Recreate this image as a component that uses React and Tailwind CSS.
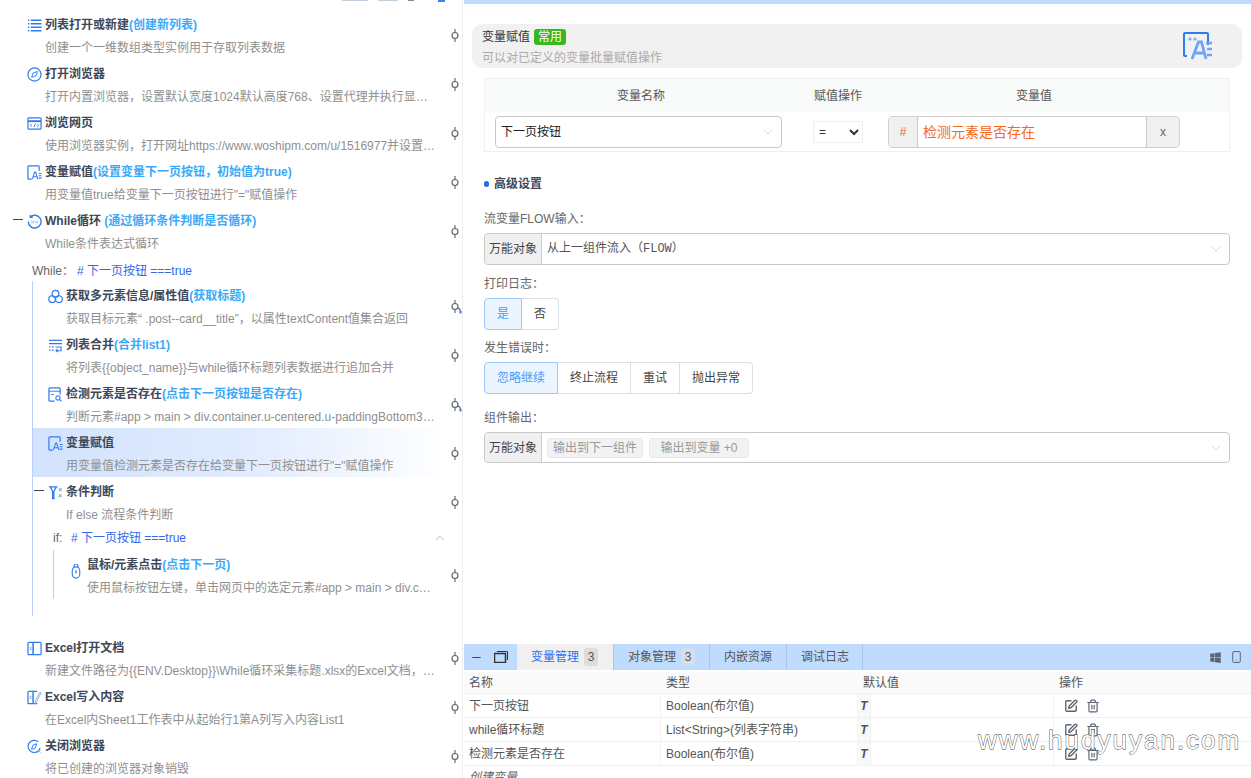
import { ChevronDown, ChevronUp, Minus, SquarePen, Trash2, Smartphone } from 'lucide-react';
import { DiWindows } from 'react-icons/di';

const BLUE = '#2f7bf0';

function IconBox({ children, className = 'w-[15px] h-[15px]' }) {
    return (
        <svg viewBox="0 0 16 16" fill="none" stroke={BLUE} strokeWidth="1.3" className={className}>
            {children}
        </svg>
    );
}

const ListIcon = () => (
    <IconBox>
        <path d="M1 2.5h1.5M1 6.2h1.5M1 9.9h1.5M1 13.6h1.5M4 2.5h11.5M4 6.2h11.5M4 9.9h11.5M4 13.6h11.5" strokeWidth="1.6" />
    </IconBox>
);
const CompassIcon = () => (
    <IconBox>
        <circle cx="8" cy="8" r="7" />
        <path d="M11.2 4.8 9.6 9.4 5 11l1.4-4.6z" strokeWidth="1" />
    </IconBox>
);
const WebIcon = () => (
    <IconBox>
        <rect x="1" y="2" width="14" height="12" rx="1" />
        <path d="M1 5.5h14" strokeWidth="2" />
        <path d="M5 8.5 3.6 10 5 11.5M11 8.5l1.4 1.5-1.4 1.5M8.8 8.2l-1.4 3.6" strokeWidth="1" />
    </IconBox>
);
const AssignIcon = () => (
    <IconBox>
        <path d="M5 15H2a1 1 0 0 1-1-1V2a1 1 0 0 1 1-1h10a1 1 0 0 1 1 1v4" />
        <path d="M3.4 4.2h.1M5.6 4.2h.1" strokeWidth="1.4" />
        <path d="M5.5 15 8.3 7.5h.8l2.6 7.5M6.6 12.6h4" strokeWidth="1.1" />
        <path d="M12.5 9h3M12.5 11.5h3M12.5 14h3" strokeWidth="1.1" />
    </IconBox>
);
const LoopIcon = () => (
    <IconBox>
        <path d="M3.5 3.2A6.8 6.8 0 1 1 1.4 8" strokeWidth="1.5" />
        <path d="M3.4.8v2.8h2.8" strokeWidth="1.2" />
        <path d="M4.5 7l.8 3 .9-2.4.9 2.4.8-3M9.4 7v3M11.4 7v3M9.4 8.5h2" stroke="#9db9e8" strokeWidth=".7" />
    </IconBox>
);
const CloudsIcon = () => (
    <IconBox>
        <circle cx="8" cy="5" r="3.6" />
        <circle cx="4.4" cy="10.8" r="3.6" />
        <circle cx="11.6" cy="10.8" r="3.6" />
    </IconBox>
);
const MergeIcon = () => (
    <IconBox>
        <path d="M1 2.5h14M1 6h14" strokeWidth="1.3" />
        <path d="M1 9.5h1.5M1 13h1.5M4 9.5h2M4 13h2" />
        <path d="M8 9.5h6v4H9M10.2 11.6 8.5 13.5l1.7 1.5" strokeWidth="1.1" />
    </IconBox>
);
const DetectIcon = () => (
    <IconBox>
        <path d="M7 15H2a1 1 0 0 1-1-1V2a1 1 0 0 1 1-1h10a1 1 0 0 1 1 1v6" />
        <path d="M1 4.5h12M3.5 8h3" strokeWidth="1" />
        <circle cx="10.6" cy="11.6" r="2.2" strokeWidth="1.1" />
        <path d="m12.3 13.3 2 2" strokeWidth="1.2" />
    </IconBox>
);
const CondIcon = () => (
    <IconBox>
        <path d="M1 2h9M2.5 2l2.5 5v7h1.2V7l2.6-5" strokeWidth="1.4" />
        <path d="M4 14.5h3.2" strokeWidth="1.2" />
        <path d="m11.4 3.4 3.2 3M14.6 3.4l-3.2 3M11.4 10l3.2 3M14.6 10l-3.2 3" strokeWidth="1.1" stroke="#86aef0" />
    </IconBox>
);
const MouseIcon = () => (
    <svg viewBox="0 0 10 16" fill="none" stroke={BLUE} strokeWidth="1.2" className="w-[10px] h-[15px]">
        <rect x="1" y="3" width="8" height="12" rx="4" />
        <path d="M3 3.2V2a2 2 0 0 1 4 0v1.2" />
        <path d="M5 7v3" strokeWidth="1.4" />
    </svg>
);
const ExcelIcon = () => (
    <IconBox>
        <rect x="1" y="1.5" width="14" height="13" rx="1" />
        <path d="M6.5 1.5v13" strokeWidth="1.6" />
        <path d="m2.6 6.2 2.4 3.4M5 6.2 2.6 9.6" strokeWidth=".9" stroke="#86aef0" />
    </IconBox>
);
const ExcelWriteIcon = () => (
    <IconBox>
        <path d="M11 1.5H2a1 1 0 0 0-1 1v11a1 1 0 0 0 1 1h9" />
        <path d="M6.5 1.5v13" strokeWidth="1.6" />
        <path d="m2.6 6.2 2.4 3.4M5 6.2 2.6 9.6" strokeWidth=".9" stroke="#86aef0" />
        <path d="m15 3-4.5 9-1.7 2.5.2-3L13.500 2.500z" strokeWidth="1" stroke="#86aef0" />
    </IconBox>
);
const CloseBrowserIcon = () => (
    <IconBox>
        <path d="M14 9.500A6.500 6.500 0 1 1 12 3" />
        <path d="M10.500 5 8.500 9.800 4.800 11l1.500-4.400z" strokeWidth="1" />
        <path d="m11.500 11.500 3 3M14.500 11.500l-3 3" strokeWidth="1" stroke="#86aef0" />
    </IconBox>
);

function Anchor({ curl }) {
    return (
        <div className="w-[15px] shrink-0 flex justify-center pt-[18px]">
            <svg width="14" height="15" viewBox="0 0 14 15" fill="none" stroke="#59606e" strokeWidth="1.1">
                <path d="M7 1v3.500M7 10.500V14" />
                <circle cx="7" cy="7.500" r="3" />
                {curl && <path d="M10 9c2 .5 2.500 2 2.500 4" stroke="#59606e" />}
                {curl && <path d="M11.500 12h2v2.500h-2z" fill={BLUE} stroke="none" />}
            </svg>
        </div>
    );
}

function StepRow({ icon, title, note, desc, pad = 'pl-[27px]', selected, dash, curl, narrow }) {
    return (
        <div className="relative flex h-[49px]">
            {dash && <span className={`absolute ${dash} top-[13px] w-[10px] h-px bg-[#444]`}></span>}
            <div
                className={`flex-1 min-w-0 pt-px pr-[9px] ${pad} ${
                    selected ? 'bg-gradient-to-r from-[#d3e3fd] via-[#e0ebfe] to-white' : ''
                }`}
            >
                <div className="flex items-center h-[28px]">
                    <span className="w-[18px] shrink-0 flex items-center">{icon}</span>
                    <span className="text-xs font-semibold text-[#3d4757] whitespace-nowrap">
                        {title}
                        {note && <span className="text-[#3ba9f7]">{note}</span>}
                    </span>
                </div>
                <div className={`ml-[18px] text-xs text-[#8f8f8f] leading-[18px] truncate ${narrow ? 'mr-[4px]' : ''}`}>{desc}</div>
            </div>
            <Anchor curl={curl} />
        </div>
    );
}

function LeftPanel() {
    return (
        <div className="w-[463px] shrink-0 border-r border-[#eeeeee] h-full overflow-hidden">
            <div className="flex h-[10px] items-start pl-[342px] gap-[10px]">
                <span className="w-[26px] h-px bg-[#c4cfdd]"></span>
                <span className="w-[20px] h-px bg-[#c4cfdd]"></span>
                <span className="w-[6px] h-px bg-[#888]"></span>
                <span className="w-[7px] h-[2px] ml-[14px] bg-[#3b82f6]"></span>
            </div>
            <StepRow icon={<ListIcon />} title="列表打开或新建" note="(创建新列表)" desc="创建一个一维数组类型实例用于存取列表数据" />
            <StepRow icon={<CompassIcon />} title="打开浏览器" desc="打开内置浏览器，设置默认宽度1024默认高度768、设置代理并执行显示浏览器窗口操作" />
            <StepRow icon={<WebIcon />} title="浏览网页" desc="使用浏览器实例，打开网址https://www.woshipm.com/u/1516977并设置超时等待时间" />
            <StepRow icon={<AssignIcon />} title="变量赋值" note="(设置变量下一页按钮，初始值为true)" desc={'用变量值true给变量下一页按钮进行"="赋值操作'} />
            <StepRow icon={<LoopIcon />} title="While循环" note=" (通过循环条件判断是否循环)" desc="While条件表达式循环" dash="left-[13px]" />
            <div className="h-[26px] pl-[32px] pt-[6px] flex items-center text-xs">
                <span className="text-[#666] w-[45px]">While：</span>
                <span className="text-[#3467ee]"># 下一页按钮 ===true</span>
            </div>
            <div className="ml-[32px] border-l border-[#b9d0fb] pb-[17px]">
                <StepRow pad="pl-[15px]" icon={<CloudsIcon />} title="获取多元素信息/属性值" note="(获取标题)" desc="获取目标元素“ .post--card__title”，以属性textContent值集合返回" curl />
                <StepRow pad="pl-[15px]" icon={<MergeIcon />} title="列表合并" note="(合并list1)" desc="将列表{{object_name}}与while循环标题列表数据进行追加合并" />
                <StepRow pad="pl-[15px]" icon={<DetectIcon />} title="检测元素是否存在" note="(点击下一页按钮是否存在)" desc="判断元素#app > main > div.container.u-centered.u-paddingBottom30.u-clearfix是否存在" curl />
                <StepRow pad="pl-[15px]" icon={<AssignIcon />} title="变量赋值" desc={'用变量值检测元素是否存在给变量下一页按钮进行"="赋值操作'} selected />
                <StepRow pad="pl-[15px]" icon={<CondIcon />} title="条件判断" desc="If else 流程条件判断" dash="left-px" />
                <div className="h-[24px] pl-[20px] pr-[15px] flex items-center text-xs">
                    <span className="text-[#666] w-[18px]">if:</span>
                    <span className="text-[#3467ee]"># 下一页按钮 ===true</span>
                    <ChevronUp className="ml-auto w-[14px] h-[14px] text-[#888]" strokeWidth={1} />
                </div>
                <div className="ml-[20px] border-l border-[#b9d0fb]">
                    <StepRow
                        pad="pl-[15px]"
                        narrow
                        icon={<span className="mt-[12px] ml-[2px]"><MouseIcon /></span>}
                        title="鼠标/元素点击"
                        note="(点击下一页)"
                        desc="使用鼠标按钮左键，单击网页中的选定元素#app > main > div.container.u-centered.u-paddingBottom30"
                    />
                </div>
            </div>
            <div className="h-[17px]"></div>
            <StepRow icon={<ExcelIcon />} title="Excel打开文档" desc="新建文件路径为{{ENV.Desktop}}\While循环采集标题.xlsx的Excel文档，并将对象保存到变量" />
            <StepRow icon={<ExcelWriteIcon />} title="Excel写入内容" desc="在Excel内Sheet1工作表中从起始行1第A列写入内容List1" />
            <StepRow icon={<CloseBrowserIcon />} title="关闭浏览器" desc="将已创建的浏览器对象销毁" />
        </div>
    );
}

function Addon({ children }) {
    return (
        <span className="w-[57px] shrink-0 h-full flex items-center justify-center bg-[#f0f0f0] border-r border-[#cccccc] text-xs text-[#444] rounded-l-[4px]">
            {children}
        </span>
    );
}

function Caret() {
    return <ChevronDown className="w-[16px] h-[16px] text-[#c6c6c6]" strokeWidth={1} />;
}

function Label({ className, children }) {
    return <div className={`text-xs text-[#666] leading-4 ${className}`}>{children}</div>;
}

function BtnGroup({ items }) {
    return (
        <div className="flex h-[32px] text-xs">
            {items.map((it, i) => (
                <span
                    key={it.label}
                    style={{ width: it.w }}
                    className={`flex items-center justify-center border-y border-r ${i === 0 ? 'border-l rounded-l-[4px]' : ''} ${
                        i === items.length - 1 ? 'rounded-r-[4px]' : ''
                    } ${i === 0 ? 'bg-[#ecf5ff] border-[#9cc9fb] text-[#4f9bf7]' : 'border-[#dcdfe6] text-[#444]'}`}
                >
                    {it.label}
                </span>
            ))}
        </div>
    );
}

function SettingsPanel() {
    return (
        <div className="flex-1 min-h-0 overflow-hidden">
            <div className="ml-[8px] mr-[9px] mt-[20px] h-[44px] rounded-[10px] bg-[#f1f1f1] pl-[10px] pr-[29px] flex items-center justify-between">
                <div className="pt-[2px]">
                    <div className="flex items-center h-[16px] mt-px">
                        <span className="text-xs text-[#333]">变量赋值</span>
                        <span className="ml-[4px] w-[32px] h-[16px] rounded-[3px] bg-[#38b81f] text-white text-xs leading-4 text-center">常用</span>
                    </div>
                    <div className="text-xs text-[#aaaaaa] leading-4 mt-[5px]">可以对已定义的变量批量赋值操作</div>
                </div>
                <svg viewBox="0 0 30 28" fill="none" className="w-[30px] h-[28px]">
                    <path d="M4 24H2a1 1 0 0 1-1-1V2a1 1 0 0 1 1-1h22a1 1 0 0 1 1 1v11" stroke="#2f7bf0" strokeWidth="2" />
                    <circle cx="7" cy="7" r="1.500" fill="#7aa9f5" />
                    <circle cx="12" cy="7" r="1.500" fill="#7aa9f5" />
                    <path d="M9 27 15.500 10h3l4.500 17M12 21h9" stroke="#6ea3f7" strokeWidth="2.800" />
                    <path d="M23 11h6M24 17h5M24 23h5" stroke="#6ea3f7" strokeWidth="2.500" />
                </svg>
            </div>

            <div className="ml-[20px] mr-[21px] mt-[10px] border border-[#eef1f4] h-[74px]">
                <div className="flex h-[33px] bg-[#f8faf9] text-xs text-[#555] items-center">
                    <span className="w-[312px] text-center">变量名称</span>
                    <span className="w-[82px] text-center">赋值操作</span>
                    <span className="w-[310px] text-center">变量值</span>
                </div>
                <div className="flex items-center h-[39px] pl-[10px]">
                    <div className="w-[287px] h-[32px] rounded-[4px] border border-[#c8c8c8] flex items-center justify-between pl-[5px] pr-[5px] text-xs text-[#222]">
                        下一页按钮
                        <Caret />
                    </div>
                    <select className="ml-[31px] w-[50px] h-[22px] border border-[#eeeeee] text-xs text-[#333] pl-[1px] bg-white">
                        <option>=</option>
                    </select>
                    <div className="ml-[25px] w-[292px] h-[32px] rounded-[4px] border border-[#d0d0d0] flex items-center text-xs overflow-hidden">
                        <span className="w-[29px] h-full shrink-0 bg-[#f0f0f0] border-r border-[#cccccc] flex items-center justify-center text-[#f26a21]">#</span>
                        <span className="flex-1 pl-[5px] text-sm text-[#f26a21]">检测元素是否存在</span>
                        <span className="w-[33px] h-full shrink-0 bg-[#f0f0f0] border-l border-[#cccccc] flex items-center justify-center text-[#666]">x</span>
                    </div>
                </div>
            </div>

            <div className="ml-[20px] mr-[21px]">
                <div className="mt-[24px] flex items-center text-xs font-semibold text-[#3d4757] leading-4">
                    <span className="w-[5px] h-[6px] rounded-full bg-[#1f6ff0] mr-[5px]"></span>
                    高级设置
                </div>
                <Label className="mt-[19px]">流变量FLOW输入：</Label>
                <div className="mt-[6px] h-[32px] rounded-[4px] border border-[#c8c8c8] flex items-center text-xs">
                    <Addon>万能对象</Addon>
                    <span className="pl-[5px] text-[#555] font-['Liberation_Mono','Noto_Sans_CJK_SC',monospace]">从上一组件流入（FLOW）</span>
                    <span className="ml-auto mr-[5px]"><Caret /></span>
                </div>
                <Label className="mt-[11px]">打印日志：</Label>
                <div className="mt-[6px]">
                    <BtnGroup items={[{ label: '是', w: 38 }, { label: '否', w: 37 }]} />
                </div>
                <Label className="mt-[10px]">发生错误时：</Label>
                <div className="mt-[6px]">
                    <BtnGroup
                        items={[
                            { label: '忽略继续', w: 74 },
                            { label: '终止流程', w: 73 },
                            { label: '重试', w: 49 },
                            { label: '抛出异常', w: 73 },
                        ]}
                    />
                </div>
                <Label className="mt-[16px]">组件输出：</Label>
                <div className="mt-[6px] h-[31px] rounded-[4px] border border-[#c8c8c8] flex items-center text-xs">
                    <Addon>万能对象</Addon>
                    <span className="ml-[5px] w-[96px] h-[20px] rounded-[3px] bg-[#f2f2f2] border border-[#e8e8e8] text-[#999] flex items-center justify-center">输出到下一组件</span>
                    <span className="ml-[6px] w-[100px] h-[20px] rounded-[3px] bg-[#f2f2f2] border border-[#e8e8e8] text-[#999] flex items-center justify-center">输出到变量 +0</span>
                    <span className="ml-auto mr-[5px]"><Caret /></span>
                </div>
            </div>
        </div>
    );
}

function VarRow({ name, type }) {
    return (
        <div className="grid grid-cols-[197px_197px_196px_197px] h-[24px] border-b border-[#f0f0f0] text-xs text-[#555] items-stretch">
            <span className="pl-[5px] flex items-center border-r border-[#f4f4f4]">{name}</span>
            <span className="pl-[5px] flex items-center border-r border-[#f4f4f4]">{type}</span>
            <span className="flex items-stretch border-r border-[#f4f4f4]">
                <span className="w-[13px] bg-[#f8f8f8] border-r border-[#f0f0f0] flex items-center justify-center italic font-bold text-[#555]">T</span>
            </span>
            <span className="pl-[10px] flex items-center gap-[8px] text-[#5a6472]">
                <SquarePen className="w-[14px] h-[14px]" strokeWidth={2.3} />
                <Trash2 className="w-[14px] h-[14px]" strokeWidth={2} />
            </span>
        </div>
    );
}

function BottomPanel() {
    const tabs = [
        { label: '变量管理', w: 97, count: 3, active: true },
        { label: '对象管理', w: 96, count: 3 },
        { label: '内嵌资源', w: 77 },
        { label: '调试日志', w: 76 },
    ];
    return (
        <div className="relative h-[134px] shrink-0 overflow-hidden">
            <div className="h-[26px] bg-[#bfdcff] flex items-stretch">
                <div className="w-[53px] flex items-center pl-[6px] text-[#333]">
                    <Minus className="w-[13px] h-[13px]" strokeWidth={1.6} />
                    <svg width="14" height="12" viewBox="0 0 14 12" fill="none" stroke="#333" className="ml-[11px]">
                        <rect x="0.500" y="2.500" width="11" height="9" strokeWidth="1.500" />
                        <path d="M3 .5h10.500V9" strokeWidth="1" />
                    </svg>
                </div>
                {tabs.map((t) => (
                    <div
                        key={t.label}
                        style={{ width: t.w }}
                        className={`flex items-center pl-[14px] text-xs border-r border-[#a9c4e4] ${
                            t.active ? 'bg-[#f0f0f0] text-[#2a6ff0]' : 'text-[#555]'
                        }`}
                    >
                        {t.label}
                        {t.count && (
                            <span className={`ml-[5px] w-[14px] h-[18px] rounded-[3px] flex items-center justify-center text-[#555] ${t.active ? 'bg-[#dddddd]' : 'bg-[#d5dfeb]'}`}>
                                {t.count}
                            </span>
                        )}
                    </div>
                ))}
                <div className="ml-auto flex items-center pr-[8px] gap-[7px] text-[#5a6472]">
                    <DiWindows className="w-[15px] h-[15px]" />
                    <Smartphone className="w-[13px] h-[16px]" strokeWidth={1.8} />
                </div>
            </div>
            <div className="mt-[2px]">
                <div className="grid grid-cols-[197px_197px_196px_197px] h-[22px] bg-[#fafafa] border-b border-[#f0f0f0] text-xs text-[#555] items-center">
                    <span className="pl-[5px]">名称</span>
                    <span className="pl-[5px]">类型</span>
                    <span className="pl-[5px]">默认值</span>
                    <span className="pl-[5px]">操作</span>
                </div>
                <VarRow name="下一页按钮" type="Boolean(布尔值)" />
                <VarRow name="while循环标题" type="List<String>(列表字符串)" />
                <VarRow name="检测元素是否存在" type="Boolean(布尔值)" />
                <div className="pl-[5px] pt-[3px] text-xs italic text-[#666]">创建变量</div>
            </div>
            <div className="absolute left-[514px] top-[81px] text-[26px] leading-[30px] tracking-[2px] text-white font-['Liberation_Sans',sans-serif] [-webkit-text-stroke:0.8px_#333] [paint-order:stroke_fill] whitespace-nowrap">
                www.hudyuyan.com
            </div>
        </div>
    );
}

export default function App() {
    return (
        <div className="w-[1251px] h-[778px] overflow-hidden flex bg-white font-['Liberation_Sans','Noto_Sans_CJK_SC',sans-serif]">
            <LeftPanel />
            <div className="w-[787px] ml-px flex flex-col h-full">
                <div className="h-[4px] shrink-0 bg-[#bfdcff]"></div>
                <SettingsPanel />
                <BottomPanel />
            </div>
        </div>
    );
}
